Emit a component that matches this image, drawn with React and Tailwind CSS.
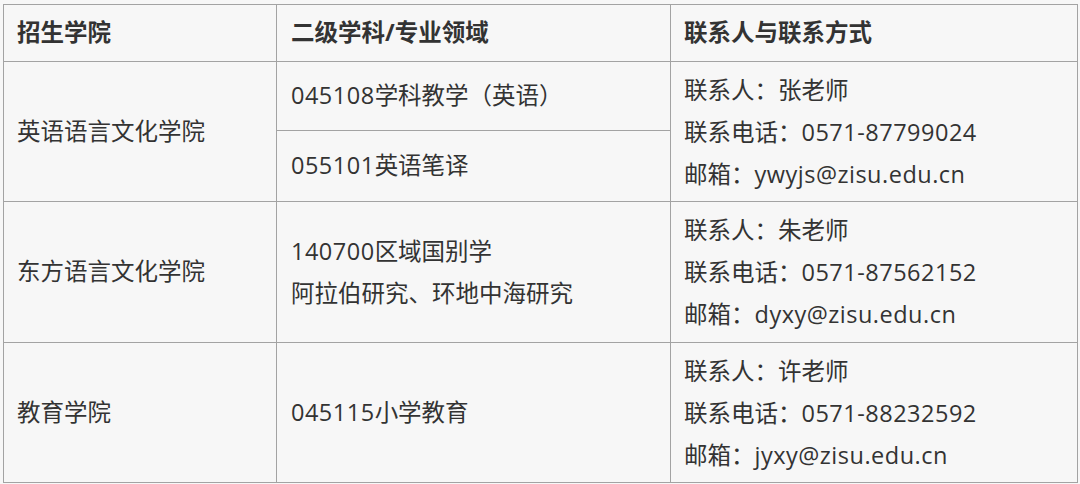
import React from "react";

const cell = "border-r border-b border-[#a3a3a3] flex items-center";
const L = ({ children }) => <span className="tracking-[0.5px]">{children}</span>;

function Contact({ name, phone, email }) {
  return (
    <div className="flex flex-col leading-[42px]">
      <span>联系人：{name}</span>
      <span>联系电话：<L>{phone}</L></span>
      <span>邮箱：<L>{email}</L></span>
    </div>
  );
}

export default function App() {
  return (
    <div
      className="w-[1080px] h-[484px] bg-[#f7f7f7] pl-[3px] pt-[4px] text-[#333333] text-[23.5px]"
      style={{ fontFamily: '"Open Sans", "Noto Sans CJK SC", sans-serif' }}
    >
      <div className="grid grid-cols-[273px_394px_407px] grid-rows-[57px_69px_71px_141px_140px] border-l border-t border-[#a3a3a3] w-[1075px]">
        {/* header */}
        <div className={`${cell} pl-[13px] font-bold`}>招生学院</div>
        <div className={`${cell} pl-[14px] font-bold`}>二级学科/专业领域</div>
        <div className={`${cell} pl-[13px] font-bold`}>联系人与联系方式</div>

        {/* row 1 */}
        <div className={`${cell} row-span-2 pl-[13px]`}>英语语言文化学院</div>
        <div className={`${cell} pl-[14px]`}><span><L>045108</L>学科教学（英语）</span></div>
        <div className={`${cell} row-span-2 pl-[13px]`}>
          <Contact name="张老师" phone="0571-87799024" email="ywyjs@zisu.edu.cn" />
        </div>
        <div className={`${cell} pl-[14px]`}><span><L>055101</L>英语笔译</span></div>

        {/* row 2 */}
        <div className={`${cell} pl-[13px]`}>东方语言文化学院</div>
        <div className={`${cell} pl-[14px]`}>
          <div className="flex flex-col leading-[42px]">
            <span><L>140700</L>区域国别学</span>
            <span>阿拉伯研究、环地中海研究</span>
          </div>
        </div>
        <div className={`${cell} pl-[13px]`}>
          <Contact name="朱老师" phone="0571-87562152" email="dyxy@zisu.edu.cn" />
        </div>

        {/* row 3 */}
        <div className={`${cell} pl-[13px]`}>教育学院</div>
        <div className={`${cell} pl-[14px]`}><span><L>045115</L>小学教育</span></div>
        <div className={`${cell} pl-[13px]`}>
          <Contact name="许老师" phone="0571-88232592" email="jyxy@zisu.edu.cn" />
        </div>
      </div>
    </div>
  );
}
